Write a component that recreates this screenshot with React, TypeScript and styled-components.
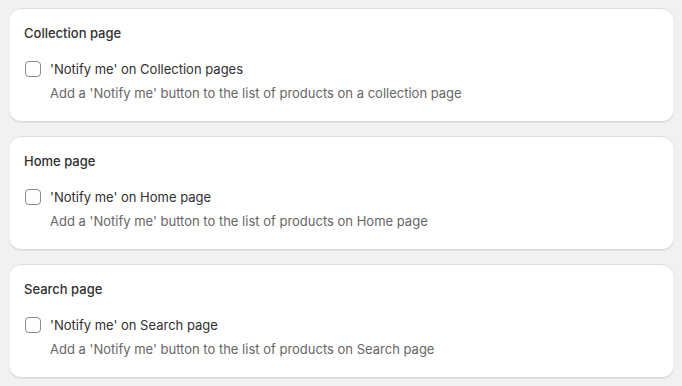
import styled, { createGlobalStyle } from "styled-components";

const GlobalStyle = createGlobalStyle`
  html, body {
    margin: 0;
    padding: 0;
    background: #f1f1f1;
  }
  body {
    font-family: Inter, "Noto Sans", sans-serif;
    color: #303030;
    -webkit-font-smoothing: antialiased;
  }
`;

type Section = {
  title: string;
  label: string;
  help: string;
};

const sections: Section[] = [
  {
    title: "Collection page",
    label: "'Notify me' on Collection pages",
    help: "Add a 'Notify me' button to the list of products on a collection page",
  },
  {
    title: "Home page",
    label: "'Notify me' on Home page",
    help: "Add a 'Notify me' button to the list of products on Home page",
  },
  {
    title: "Search page",
    label: "'Notify me' on Search page",
    help: "Add a 'Notify me' button to the list of products on Search page",
  },
];

function App() {
  return (
    <>
      <GlobalStyle />
      <Page>
        {sections.map((s) => (
          <Card key={s.title}>
            <Title>{s.title}</Title>
            <Option>
              <Box type="checkbox" />
              <OptionText>
                <Label>{s.label}</Label>
                <Help>{s.help}</Help>
              </OptionText>
            </Option>
          </Card>
        ))}
      </Page>
    </>
  );
}

const Page = styled.div`
  display: flex;
  flex-direction: column;
  gap: 14px;
  padding: 8px 8px 8px 9px;
`;

const Card = styled.section`
  background: #fff;
  border-radius: 12px;
  box-shadow: 0 1px 0 0 rgba(26, 26, 26, 0.07), 0 1px 0 0 rgba(204, 204, 204, 0.5) inset,
    0 -1px 0 0 rgba(0, 0, 0, 0.1) inset, 0 0 0 1px rgba(0, 0, 0, 0.05) inset;
  padding: 15px 15px 19px 15px;
  display: flex;
  flex-direction: column;
  gap: 16px;
`;

const Title = styled.h2`
  margin: 0;
  font-size: 13px;
  line-height: 20px;
  font-weight: 550;
  color: #303030;
`;

const Option = styled.label`
  display: flex;
  align-items: flex-start;
  gap: 9px;
  padding-left: 1px;
`;

const Box = styled.input`
  appearance: none;
  margin: 2px 0 0;
  width: 16px;
  height: 16px;
  border: 1px solid #8a8a8a;
  border-radius: 4px;
  background: #fff;
  flex-shrink: 0;
`;

const OptionText = styled.div`
  display: flex;
  flex-direction: column;
  gap: 4px;
`;

const Label = styled.span`
  font-size: 13px;
  line-height: 20px;
  color: #303030;
`;

const Help = styled.span`
  font-size: 13px;
  line-height: 20px;
  color: #666666;
`;

export default App;
